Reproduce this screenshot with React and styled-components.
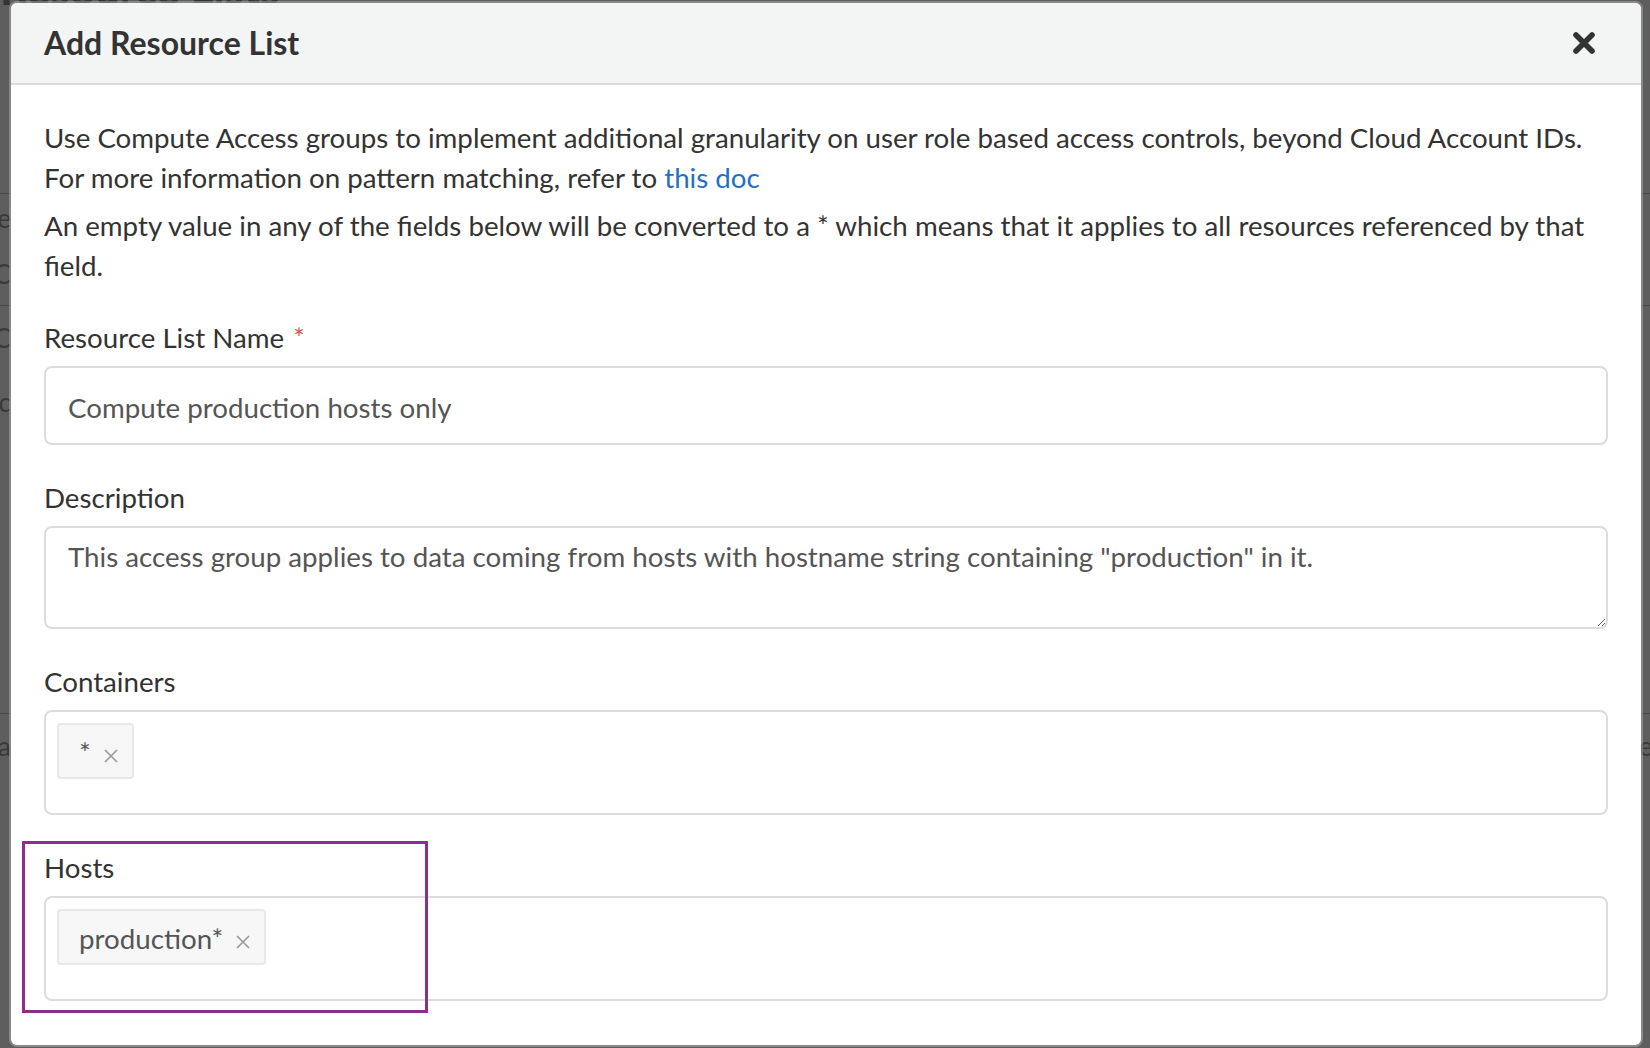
import React from 'react';
import styled, { createGlobalStyle } from 'styled-components';

const GlobalStyle = createGlobalStyle`
  html, body { margin: 0; padding: 0; }
  body {
    width: 1650px;
    height: 1048px;
    overflow: hidden;
    background: #ffffff;
    font-family: Lato, "Open Sans", "Liberation Sans", sans-serif;
  }
  * { box-sizing: border-box; }
`;

const Page = styled.div`
  position: relative;
  width: 1650px;
  height: 1048px;
  overflow: hidden;
  background: #ffffff;
`;

/* ---------- background page (seen through the overlay) ---------- */
const BgPage = styled.div`
  display: flex;
  flex-direction: column;
  font-family: Lato, sans-serif;
  color: #9c9c9c;
`;

const BgHeading = styled.div`
  margin-top: -34px;
  font-size: 44px;
  line-height: 44px;
  font-weight: 700;
  color: #8a8a8a;
  white-space: nowrap;
`;

const BgRow = styled.div`
  display: flex;
  justify-content: space-between;
  align-items: center;
  height: ${(p) => p.$h}px;
  border-bottom: ${(p) => (p.$line ? '1px solid #c8c8c8' : 'none')};
  font-size: 26px;
`;

const BgCell = styled.div`
  width: 11px;
  display: flex;
  justify-content: ${(p) => (p.$right ? 'flex-start' : 'flex-end')};
  overflow: hidden;
  white-space: nowrap;
`;

/* ---------- overlay + modal ---------- */
const Overlay = styled.div`
  position: absolute;
  inset: 0;
  background: rgba(0, 0, 0, 0.63);
  padding: 3px 9px 0 11px;
`;

const Modal = styled.div`
  width: 1630px;
  height: 1042px;
  background: #ffffff;
  border-radius: 6px;
  box-shadow: 0 0 0 2px rgba(190, 190, 190, 0.45);
  display: flex;
  flex-direction: column;
`;

const Header = styled.header`
  display: flex;
  align-items: center;
  justify-content: space-between;
  height: 82px;
  padding: 0 46px 0 33px;
  background: #f3f5f4;
  border-bottom: 2px solid #dcdcdc;
  border-radius: 6px 6px 0 0;
`;

const Title = styled.h2`
  margin: 0;
  font-size: 32px;
  line-height: 40px;
  font-weight: 700;
  color: #333333;
`;

const CloseButton = styled.button`
  display: flex;
  align-items: center;
  justify-content: center;
  padding: 0;
  border: none;
  background: transparent;
  cursor: pointer;
`;

const Body = styled.div`
  padding: 33px 33px 0;
`;

const Intro = styled.div`
  margin-bottom: 32px;
`;

const Para = styled.p`
  margin: 0;
  font-size: 27.7px;
  line-height: 40px;
  color: #333333;
  & + & { margin-top: 8px; }
`;

const Link = styled.a`
  color: #1f6fc8;
  text-decoration: none;
`;

const Field = styled.div`
  position: relative;
  margin-bottom: 33px;
`;

const Label = styled.label`
  display: block;
  margin-bottom: 8px;
  font-size: 27.7px;
  line-height: 40px;
  color: #333333;
`;

const Required = styled.span`
  margin-left: 9px;
  font-size: 27px;
  color: #d9534f;
`;

const TextInput = styled.input`
  display: block;
  width: 100%;
  height: 79px;
  padding: 4px 22px 0;
  border: 2px solid #dcdcdc;
  border-radius: 8px;
  font-family: Lato, sans-serif;
  font-size: 27.7px;
  color: #555555;
  background: #ffffff;
  outline: none;
`;

const TextArea = styled.textarea`
  display: block;
  width: 100%;
  height: 103px;
  padding: 9px 22px;
  border: 2px solid #dcdcdc;
  border-radius: 8px;
  font-family: Lato, sans-serif;
  font-size: 27.7px;
  line-height: 40px;
  color: #555555;
  background: #ffffff;
  outline: none;
  resize: vertical;
`;

const TagBox = styled.div`
  display: flex;
  align-items: flex-start;
  gap: 10px;
  height: ${(p) => p.$h}px;
  padding: 11px;
  border: 2px solid #dcdcdc;
  border-radius: 8px;
  background: #ffffff;
`;

const Chip = styled.span`
  display: inline-block;
  height: 56px;
  padding: 8px 14px 0 20px;
  border: 2px solid #e8e8e8;
  border-radius: 4px;
  background: #f7f7f7;
  font-size: 27.7px;
  line-height: 40px;
  color: #555555;
  white-space: nowrap;
`;

const ChipRemove = styled.svg`
  display: inline-block;
  width: 14px;
  height: 14px;
  margin-left: 13px;
  vertical-align: baseline;
`;

const Annotation = styled.div`
  position: absolute;
  top: -7px;
  left: -22px;
  width: 406px;
  height: 172px;
  border: 3px solid #88308b;
  pointer-events: none;
`;

const RemoveIcon = () => (
  <ChipRemove viewBox="0 0 14 14">
    <path d="M1 1 L13 13 M13 1 L1 13" stroke="#9a9a9a" strokeWidth="1.7" fill="none" />
  </ChipRemove>
);

const Tag = ({ children }) => (
  <Chip>
    {children}
    <RemoveIcon />
  </Chip>
);

export default function App() {
  return (
    <Page>
      <GlobalStyle />
      <BgPage>
        <BgHeading>Resource Lists</BgHeading>
        <BgRow $h={184} $line />
        <BgRow $h={48}><BgCell>Name</BgCell></BgRow>
        <BgRow $h={64} $line><BgCell>C</BgCell></BgRow>
        <BgRow $h={64}><BgCell>CC</BgCell></BgRow>
        <BgRow $h={64}><BgCell>Ac</BgCell></BgRow>
        <BgRow $h={280} $line />
        <BgRow $h={64}>
          <BgCell>Pla</BgCell>
          <BgCell $right>e</BgCell>
        </BgRow>
      </BgPage>
      <Overlay>
        <Modal role="dialog" aria-label="Add Resource List">
          <Header>
            <Title>Add Resource List</Title>
            <CloseButton aria-label="Close">
              <svg width="22" height="22" viewBox="0 0 22 22">
                <path d="M3 3 L19 19 M19 3 L3 19" stroke="#333333" strokeWidth="5.6" strokeLinecap="round" fill="none" />
              </svg>
            </CloseButton>
          </Header>
          <Body>
            <Intro>
              <Para>
                Use Compute Access groups to implement additional granularity on user role based access controls, beyond Cloud Account IDs.
                <br />
                For more information on pattern matching, refer to <Link href="#">this doc</Link>
              </Para>
              <Para>
                An empty value in any of the fields below will be converted to a * which means that it applies to all resources referenced by that
                <br />
                field.
              </Para>
            </Intro>

            <Field>
              <Label>
                Resource List Name<Required>*</Required>
              </Label>
              <TextInput readOnly value="Compute production hosts only" />
            </Field>

            <Field>
              <Label>Description</Label>
              <TextArea
                readOnly
                value={'This access group applies to data coming from hosts with hostname string containing "production" in it.'}
              />
            </Field>

            <Field>
              <Label>Containers</Label>
              <TagBox $h={105}>
                <Tag>*</Tag>
              </TagBox>
            </Field>

            <Field>
              <Label>Hosts</Label>
              <TagBox $h={105}>
                <Tag>production*</Tag>
              </TagBox>
              <Annotation />
            </Field>
          </Body>
        </Modal>
      </Overlay>
    </Page>
  );
}
